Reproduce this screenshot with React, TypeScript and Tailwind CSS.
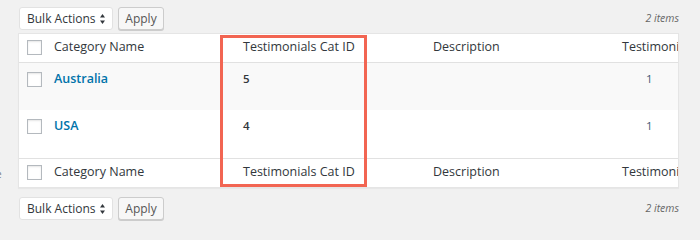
import React from "react";

const rows = [
  { name: "Australia", id: "5", count: "1" },
  { name: "USA", id: "4", count: "1" },
];

function Checkbox() {
  return <span className="block w-[15px] h-[15px] border border-[#b4b9be] bg-white shadow-[inset_0_1px_2px_rgba(0,0,0,0.1)]" />;
}

function TableNav({ className = "" }: { className?: string }) {
  return (
    <div className={`flex items-center h-[23px] ${className}`}>
      <div className="flex items-center h-[23px] w-[94px] ml-px pl-[7px] pr-[6px] bg-white border border-[#e2e2e2] rounded-[3px] text-[12px] text-[#32373c]">
        <span className="flex-1 whitespace-nowrap">Bulk Actions</span>
        <svg width="5" height="10" viewBox="0 0 5 10" className="fill-[#32373c] mr-[1px]">
          <path d="M2.5 0 L5 3.5 L0 3.5 Z" />
          <path d="M0 6.5 L5 6.5 L2.5 10 Z" />
        </svg>
      </div>
      <button className="ml-[5px] h-[23px] w-[46px] bg-[#f7f7f7] border border-[#cccccc] rounded-[3px] shadow-[0_1px_0_#ccc] text-[12px] text-[#555]">
        Apply
      </button>
      <span className="ml-auto italic text-[10.5px] text-[#666]">2 items</span>
    </div>
  );
}

export default function App() {
  return (
    <div className="min-h-screen bg-[#f1f1f1] font-['Open_Sans',sans-serif] text-[12.5px] text-[#32373c] flex overflow-hidden">
      <div className="w-[18px] shrink-0 flex flex-col">
        <div className="mt-[167px] -ml-[4px] text-[10px] text-[#72777c]">e</div>
      </div>
      <div className="w-[661px] pt-[7px] relative">
        <TableNav className="mb-[3px]" />
        <div className="relative border border-[#e5e5e5] bg-white shadow-[0_1px_1px_rgba(0,0,0,0.04)] overflow-hidden">
          <table className="table-fixed border-collapse w-[720px]">
            <colgroup>
              <col className="w-[26px]" />
              <col className="w-[188px]" />
              <col className="w-[190px]" />
              <col className="w-[189px]" />
              <col className="w-[127px]" />
            </colgroup>
            <thead>
              <tr className="h-[28px] border-b border-[#e1e1e1]">
                <td className="pl-[8px] align-middle"><Checkbox /></td>
                <th className="pl-[9px] text-left font-normal">Category Name</th>
                <th className="pl-[10px] text-left font-normal">Testimonials Cat ID</th>
                <th className="pl-[10px] text-left font-normal">Description</th>
                <th className="pl-[10px] text-left font-normal whitespace-nowrap">Testimonials Count</th>
              </tr>
            </thead>
            <tbody>
              {rows.map((r, i) => (
                <tr key={r.name} className={`h-[48px] align-top ${i % 2 === 0 ? "bg-[#f9f9f9]" : "bg-white"}`}>
                  <td className="pl-[8px] pt-[9px]"><Checkbox /></td>
                  <td className="pl-[9px] pt-[7px] font-semibold text-[#0073aa]">{r.name}</td>
                  <td className="pl-[10px] pt-[7px] font-semibold text-[11.5px] text-[#32373c]">{r.id}</td>
                  <td className="pl-[10px] pt-[7px]"></td>
                  <td className="pt-[7px] text-left pl-[34px] text-[#3f5a78] text-[11.5px]">{r.count}</td>
                </tr>
              ))}
            </tbody>
            <tfoot>
              <tr className="h-[29px] border-t border-[#e1e1e1]">
                <td className="pl-[8px] align-middle"><Checkbox /></td>
                <th className="pl-[9px] text-left font-normal">Category Name</th>
                <th className="pl-[10px] text-left font-normal">Testimonials Cat ID</th>
                <th className="pl-[10px] text-left font-normal">Description</th>
                <th className="pl-[10px] text-left font-normal whitespace-nowrap">Testimonials Count</th>
              </tr>
            </tfoot>
          </table>
        </div>
        <TableNav className="mt-[9px]" />
        <div className="absolute left-[202px] top-[35px] w-[147px] h-[152px] border-[3px] border-[#f26552] pointer-events-none" />
      </div>
    </div>
  );
}
